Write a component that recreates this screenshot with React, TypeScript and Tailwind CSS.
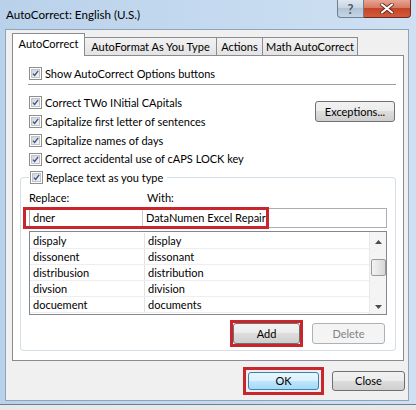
import React from "react";

function Check() {
  return (
    <span className="inline-flex w-[13px] h-[13px] border border-[#8e8f8f] bg-white p-[1px] shrink-0">
      <span className="flex w-full h-full items-center justify-center bg-[linear-gradient(135deg,#d0d3d8,#f6f6f6)] border border-[#c2c4c7]">
        <svg width="9" height="9" viewBox="0 0 9 9">
          <path d="M1.2 4.6 L3.4 7 L7.9 1.2" stroke="#3d5287" strokeWidth="1.7" fill="none" />
        </svg>
      </span>
    </span>
  );
}

function CheckRow({ label, className = "" }: { label: string; className?: string }) {
  return (
    <div className={"flex items-center gap-[3px] whitespace-nowrap " + className}>
      <Check />
      <span>{label}</span>
    </div>
  );
}

const btn =
  "flex items-center justify-center border border-[#707070] rounded-[3px] bg-[linear-gradient(#f2f2f2_0%,#ebebeb_50%,#dddddd_50%,#cfcfcf_100%)] text-black whitespace-nowrap";

const rows: [string, string][] = [
  ["dispaly", "display"],
  ["dissonent", "dissonant"],
  ["distribusion", "distribution"],
  ["divsion", "division"],
  ["docuement", "documents"],
];

export default function App() {
  return (
    <div className="w-[416px] h-[410px] bg-[#e8e8e8] overflow-hidden font-['Lato',sans-serif] text-[11px] leading-[16px] text-black">
      <div className="w-[416px] h-[405px] flex flex-col bg-[linear-gradient(90deg,#b9d1ea,#c6dbf0_60%,#cfe0f2)] border-b border-[#6e7f92]">
        {/* title bar */}
        <div className="h-[29px] flex justify-between shrink-0">
          <div className="self-center pl-[6px] pt-[1px] text-[11.6px] text-black whitespace-nowrap">AutoCorrect: English (U.S.)</div>
          <div className="flex items-start mr-[5px]">
            <div className="w-[27px] h-[18px] rounded-bl-[4px] border border-t-0 border-[#6f7f92] bg-[linear-gradient(#dfe7f0_0%,#c7d3e0_50%,#b3c2d4_50%,#c7d6e6_100%)] flex items-center justify-center text-[13px] font-bold text-[#4b5a6c]">
              ?
            </div>
            <div className="w-[47px] h-[18px] rounded-br-[4px] border border-t-0 border-l-0 border-[#6d2a21] bg-[linear-gradient(#e8a493_0%,#d67a62_45%,#c44427_50%,#d45a3c_100%)] flex items-center justify-center">
              <svg width="14" height="11" viewBox="0 0 14 11">
                <path d="M2 1.5 L12 9.5 M12 1.5 L2 9.5" stroke="#5a2016" strokeWidth="3.6" strokeLinecap="round" />
                <path d="M2 1.5 L12 9.5 M12 1.5 L2 9.5" stroke="#ffffff" strokeWidth="2.2" strokeLinecap="round" />
              </svg>
            </div>
          </div>
        </div>
        {/* client */}
        <div className="ml-[5px] mr-[7px] h-[372px] border border-[#8ea4bb] bg-[#f0f0f0] flex flex-col">
          {/* tabs */}
          <div className="flex items-end pl-[6px] pt-[3px] mb-[-1px] relative z-10 whitespace-nowrap">
            <div className="w-[73px] h-[23px] border border-b-0 border-[#898c95] bg-white flex items-center justify-center pb-[2px]">
              AutoCorrect
            </div>
            <div className="w-[132px] h-[19px] border border-l-0 border-[#898c95] bg-[linear-gradient(#f2f2f2,#e3e3e3)] flex items-center justify-center">
              AutoFormat As You Type
            </div>
            <div className="w-[46px] h-[19px] border border-l-0 border-[#898c95] bg-[linear-gradient(#f2f2f2,#e3e3e3)] flex items-center justify-center">
              Actions
            </div>
            <div className="w-[95px] h-[19px] border border-l-0 border-[#898c95] bg-[linear-gradient(#f2f2f2,#e3e3e3)] flex items-center justify-center">
              Math AutoCorrect
            </div>
          </div>
          {/* panel */}
          <div className="ml-[6px] w-[392px] h-[306px] border border-[#898c95] bg-white flex flex-col shrink-0">
            <CheckRow label="Show AutoCorrect Options buttons" className="mt-[11px] ml-[16px] h-[13px]" />
            <div className="mt-[4px] ml-[15px] mr-[7px] h-px bg-[#a0a0a0]" />
            <div className="mt-[8px] flex justify-between">
              <div className="flex flex-col ml-[16px]">
                <CheckRow label="Correct TWo INitial CApitals" className="h-[19px]" />
                <CheckRow label="Capitalize first letter of sentences" className="h-[19px]" />
                <CheckRow label="Capitalize names of days" className="h-[19px]" />
                <CheckRow label="Correct accidental use of cAPS LOCK key" className="h-[18px]" />
              </div>
              <div className={btn + " mt-[8px] mr-[8px] w-[80px] h-[21px]"}>Exceptions...</div>
            </div>
            <fieldset className="ml-[7px] mr-[7px] border border-[#d5dfe5] rounded-[3px] px-[8px] pb-[3px]">
              <legend className="pl-[1px] pr-[4px] h-[19px] flex items-center">
                <CheckRow label="Replace text as you type" />
              </legend>
              <div className="mt-[3px] h-[16px] flex">
                <span className="w-[118px]">Replace:</span>
                <span>With:</span>
              </div>
              <div className="mt-[2px] h-[20px] flex border border-[#abadb3] bg-white relative">
                <div className="w-[113px] border-r border-[#c9cbd1] pl-[3px] flex items-center">dner</div>
                <div className="pl-[3px] flex items-center whitespace-nowrap">DataNumen Excel Repair</div>
                <div className="absolute left-[-7px] top-[-2px] w-[246px] h-[22px] border-[3px] border-[#c9252c]" />
              </div>
              <div className="mt-[3px] h-[84px] border border-[#828790] bg-white flex overflow-hidden">
                <div className="flex-1 pt-[1px]">
                  {rows.map(([a, b]) => (
                    <div key={a} className="h-[16px] flex border-b border-[#eeeeee] shrink-0">
                      <div className="w-[115px] border-r border-[#e2e2e2] pl-[3px] leading-[16px]">{a}</div>
                      <div className="pl-[3px] leading-[16px]">{b}</div>
                    </div>
                  ))}
                </div>
                <div className="w-[17px] bg-[#f4f4f4] border-l border-[#e8e8e8] flex flex-col items-center">
                  <div className="h-[17px] flex items-center justify-center mt-[1px]">
                    <svg width="7" height="4" viewBox="0 0 7 4"><path d="M0 4 L3.5 0 L7 4Z" fill="#4d4d4d" /></svg>
                  </div>
                  <div className="mt-[9px] w-[15px] h-[17px] rounded-[2px] border border-[#9a9a9a] bg-[linear-gradient(90deg,#f3f3f3,#e6e6e6_50%,#d6d6d6)]" />
                  <div className="flex-1" />
                  <div className="h-[14px] flex items-center justify-center">
                    <svg width="7" height="4" viewBox="0 0 7 4"><path d="M0 0 L3.5 4 L7 0Z" fill="#4d4d4d" /></svg>
                  </div>
                </div>
              </div>
              <div className="mt-[5px] flex justify-end items-center">
                <div className="w-[73px] h-[27px] border-[3px] border-[#c9252c] flex">
                  <div className={btn + " flex-1"}>Add</div>
                </div>
                <div className="ml-[9px] mr-[2px] w-[73px] h-[21px] flex items-center justify-center border border-[#adb2b5] rounded-[3px] bg-[#f4f4f4] text-[#838383]">
                  Delete
                </div>
              </div>
            </fieldset>
          </div>
          {/* bottom buttons */}
          <div className="mt-[6px] flex justify-end items-center pr-[3px]">
            <div className="w-[81px] h-[28px] border-[3px] border-[#c9252c] p-[2px] flex">
              <div className="flex-1 flex items-center justify-center border border-[#3c7fb1] rounded-[3px] bg-[linear-gradient(#eaf6fd_0%,#d9f0fc_50%,#bee6fd_50%,#a7d9f5_100%)]">
                OK
              </div>
            </div>
            <div className={btn + " ml-[8px] w-[73px] h-[20px]"}>Close</div>
          </div>
        </div>
      </div>
    </div>
  );
}
